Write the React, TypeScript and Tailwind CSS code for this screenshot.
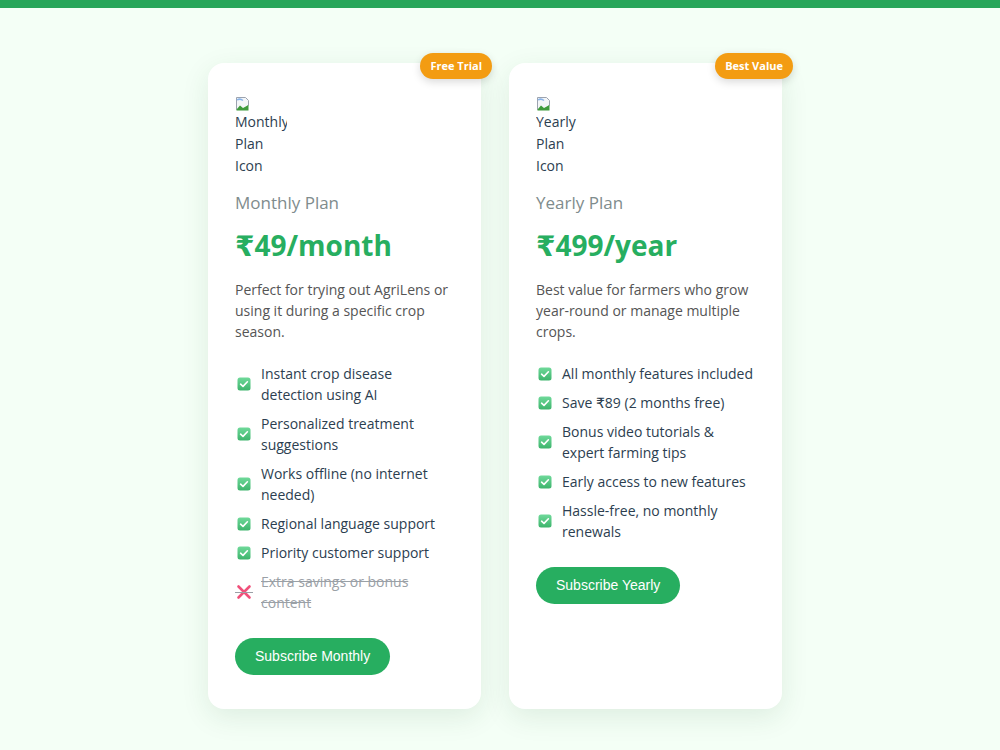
import React from "react";

type Feature = { text: string; included: boolean };

interface Plan {
	id: string;
	badge: string;
	iconAlt: string[];
	title: string;
	price: string;
	description: string;
	features: Feature[];
	cta: string;
}

const plans: Plan[] = [
	{
		id: "monthly",
		badge: "Free Trial",
		iconAlt: ["Monthly", "Plan", "Icon"],
		title: "Monthly Plan",
		price: "₹49/month",
		description:
			"Perfect for trying out AgriLens or using it during a specific crop season.",
		features: [
			{ text: "Instant crop disease detection using AI", included: true },
			{ text: "Personalized treatment suggestions", included: true },
			{ text: "Works offline (no internet needed)", included: true },
			{ text: "Regional language support", included: true },
			{ text: "Priority customer support", included: true },
			{ text: "Extra savings or bonus content", included: false },
		],
		cta: "Subscribe Monthly",
	},
	{
		id: "yearly",
		badge: "Best Value",
		iconAlt: ["Yearly", "Plan", "Icon"],
		title: "Yearly Plan",
		price: "₹499/year",
		description:
			"Best value for farmers who grow year-round or manage multiple crops.",
		features: [
			{ text: "All monthly features included", included: true },
			{ text: "Save ₹89 (2 months free)", included: true },
			{ text: "Bonus video tutorials & expert farming tips", included: true },
			{ text: "Early access to new features", included: true },
			{ text: "Hassle-free, no monthly renewals", included: true },
		],
		cta: "Subscribe Yearly",
	},
];

const CheckIcon = () => (
	<svg width="14" height="14" viewBox="0 0 14 14">
		<defs>
			<linearGradient id="chk" x1="0" y1="0" x2="0" y2="1">
				<stop offset="0" stopColor="#6fd99a" />
				<stop offset="1" stopColor="#3db46c" />
			</linearGradient>
		</defs>
		<rect x="0.5" y="0.5" width="13" height="13" rx="2.5" fill="url(#chk)" />
		<path
			d="M3.6 7.2 L6 9.4 L10.4 4.8"
			fill="none"
			stroke="#fff"
			strokeWidth="1.6"
			strokeLinecap="round"
			strokeLinejoin="round"
		/>
	</svg>
);

const CrossIcon = () => (
	<svg width="18" height="16" viewBox="0 0 18 16">
		<path
			d="M3.5 2.5 L14.5 13.5 M14.5 2.5 L3.5 13.5"
			stroke="#f0507a"
			strokeWidth="2.6"
			strokeLinecap="round"
		/>
		<line x1="0" y1="8.5" x2="18" y2="8.5" stroke="#9aa0a6" strokeWidth="1" />
	</svg>
);

// placeholder shown while the plan artwork is missing
const BrokenImage = ({ lines }: { lines: string[] }) => (
	<div className="w-[52px] overflow-hidden text-[14px] leading-[22px] text-[#2c3e50]">
		<svg width="16" height="14" viewBox="0 0 16 14" className="block">
			<path d="M1.5 0.5 H10.5 L13.5 3.5 V8 L9 12.5 H1.5 Z" fill="#f4f6f8" stroke="#9ca3af" />
			<path d="M1.5 12.5 L5 8.5 L8 11 L13.5 8 V13.5 H1.5 Z" fill="#3f9b3c" />
			<path d="M2 3 Q5 1 8 3.5" fill="none" stroke="#8ab4e8" strokeWidth="1.5" />
		</svg>
		{lines.map((l) => (
			<div key={l} className="whitespace-nowrap">
				{l}
			</div>
		))}
	</div>
);

const PlanCard = ({ plan }: { plan: Plan }) => (
	<div className="relative flex w-[273px] flex-col rounded-[16px] bg-white px-[27px] pb-[34px] pt-[34px] shadow-[0_8px_28px_rgba(30,80,40,0.10)]">
		<span className="absolute right-[-11px] top-[-10px] rounded-full bg-[#f39c12] px-[10px] py-[6px] text-[11px] font-bold leading-[14px] text-white shadow-[0_3px_8px_rgba(0,0,0,0.15)]">
			{plan.badge}
		</span>

		<BrokenImage lines={plan.iconAlt} />

		<h3 className="mt-[12px] text-[17px] leading-[27px] text-[#7f8c8d]">
			{plan.title}
		</h3>
		<div className="mt-[8px] text-[28px] font-bold leading-[42px] text-[#27ae60]">
			{plan.price}
		</div>
		<p className="mt-[13px] text-[14px] leading-[21px] text-[#555]">
			{plan.description}
		</p>

		<ul className="mt-[21px] flex flex-col gap-[8px]">
			{plan.features.map((f) => (
				<li key={f.text} className="flex items-center gap-[8px]">
					<span className="flex w-[18px] shrink-0 justify-center">
						{f.included ? <CheckIcon /> : <CrossIcon />}
					</span>
					<span
						className={
							f.included
								? "text-[14px] font-medium leading-[21px] text-[#2c3e50]"
								: "text-[14px] font-medium leading-[21px] text-[#9aa0a6] line-through"
						}
					>
						{f.text}
					</span>
				</li>
			))}
		</ul>

		<div className="mt-[25px]">
			<button className="rounded-full bg-[#27ae60] px-[20px] py-[9px] font-['Liberation_Sans',Arial,sans-serif] text-[14px] leading-[19px] text-white">
				{plan.cta}
			</button>
		</div>
	</div>
);

export default function App() {
	return (
		<div className="min-h-[750px] bg-[#f4fff6] font-['Open_Sans','DejaVu_Sans',sans-serif]">
			<div className="h-[8px] bg-[#27a65a]" />
			<div className="flex items-stretch justify-center gap-[28px] pr-[10px] pt-[55px]">
				{plans.map((p) => (
					<PlanCard key={p.id} plan={p} />
				))}
			</div>
		</div>
	);
}
